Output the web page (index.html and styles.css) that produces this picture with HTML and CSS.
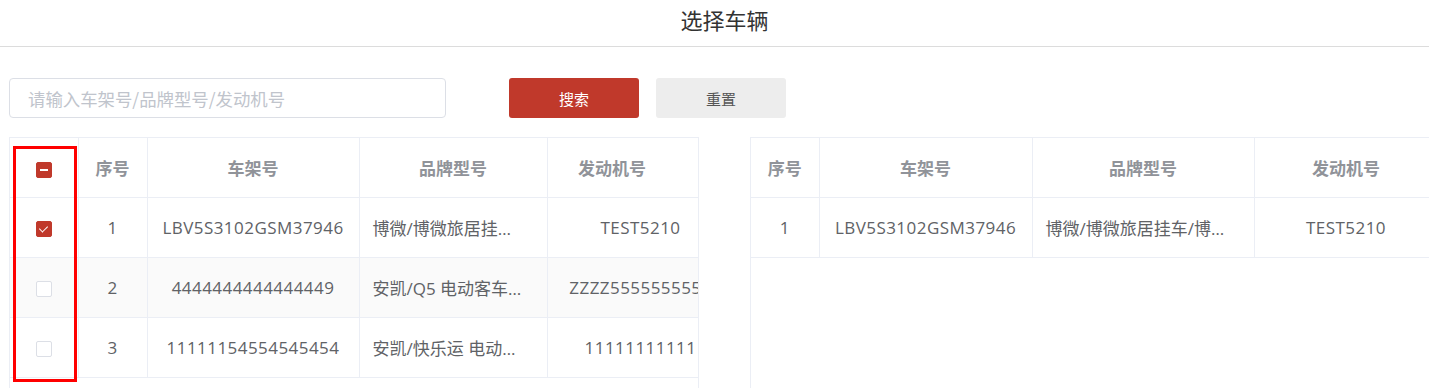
FILE: index.html
```html
<!DOCTYPE html>
<html lang="zh-CN">
<head>
    <meta charset="UTF-8">
    <meta name="viewport" content="width=device-width, initial-scale=1.0">
    <title>选择车辆</title>
    <link rel="stylesheet" href="styles.css">
</head>
<body>
    <div class="dialog-header">选择车辆</div>

    <div class="toolbar">
        <input type="text" class="search-input" placeholder="请输入车架号/品牌型号/发动机号">
        <button class="btn btn-primary">搜索</button>
        <button class="btn btn-default">重置</button>
    </div>

    <div class="panes">
        <div class="pane pane-left">
            <table class="grid grid-left">
                <colgroup>
                    <col class="col-check">
                    <col class="col-index">
                    <col class="col-vin">
                    <col class="col-brand">
                    <col class="col-engine">
                </colgroup>
                <thead>
                    <tr>
                        <th><span class="checkbox half"></span></th>
                        <th>序号</th>
                        <th>车架号</th>
                        <th>品牌型号</th>
                        <th class="engine-head">发动机号</th>
                    </tr>
                </thead>
                <tbody>
                    <tr>
                        <td><span class="checkbox checked"></span></td>
                        <td class="code">1</td>
                        <td class="code">LBV5S3102GSM37946</td>
                        <td class="left ellipsis">博微/博微旅居挂车/博微</td>
                        <td class="code">TEST5210</td>
                    </tr>
                    <tr class="stripe">
                        <td><span class="checkbox"></span></td>
                        <td class="code">2</td>
                        <td class="code">4444444444444449</td>
                        <td class="left ellipsis">安凯/Q5 电动客车/安凯</td>
                        <td class="code clip">ZZZZ5555555555</td>
                    </tr>
                    <tr>
                        <td><span class="checkbox"></span></td>
                        <td class="code">3</td>
                        <td class="code">11111154554545454</td>
                        <td class="left ellipsis">安凯/快乐运 电动客车</td>
                        <td class="code clip">11111111111</td>
                    </tr>
                </tbody>
            </table>
            <div class="highlight"></div>
        </div>

        <div class="pane pane-right">
            <table class="grid grid-right">
                <colgroup>
                    <col class="col-index-r">
                    <col class="col-vin-r">
                    <col class="col-brand-r">
                    <col class="col-engine-r">
                </colgroup>
                <thead>
                    <tr>
                        <th>序号</th>
                        <th>车架号</th>
                        <th>品牌型号</th>
                        <th>发动机号</th>
                    </tr>
                </thead>
                <tbody>
                    <tr>
                        <td class="code">1</td>
                        <td class="code">LBV5S3102GSM37946</td>
                        <td class="left ellipsis">博微/博微旅居挂车/博微旅居</td>
                        <td class="code">TEST5210</td>
                    </tr>
                </tbody>
            </table>
        </div>
    </div>
</body>
</html>
```

FILE: styles.css
```css
*{
    box-sizing: border-box;
}
body{
    margin: 0;
    font-family: "Noto Sans CJK SC", sans-serif;
    color: #606266;
    background: #fff;
    overflow: hidden;
}
.dialog-header{
    height: 47px;
    line-height: 38px;
    padding-left: 20px;
    text-align: center;
    font-size: 22px;
    color: #333;
    border-bottom: 1px solid #dcdcdc;
}
.toolbar{
    display: flex;
    align-items: center;
    padding: 31px 9px 0;
}
.search-input{
    width: 437px;
    height: 40px;
    border: 1px solid #dcdfe6;
    border-radius: 4px;
    padding: 0 18px;
    font-family: inherit;
    font-size: 17.4px;
    color: #606266;
    outline: none;
}
.search-input::placeholder{
    color: #c0c4cc;
}
.btn{
    width: 130px;
    height: 40px;
    border: none;
    border-radius: 3px;
    font-family: inherit;
    font-size: 15px;
}
.btn-primary{
    margin-left: 63px;
    background: #c0392b;
    color: #fff;
}
.btn-default{
    margin-left: 17px;
    background: #ededed;
    color: #555;
}
.panes{
    display: flex;
    gap: 51px;
    padding: 19px 0 0 9px;
    height: 400px;
}
.pane{
    position: relative;
    overflow: hidden;
    border-left: 1px solid #ebeef5;
}
.pane-left{
    width: 690px;
    flex: none;
    border-right: 1px solid #ebeef5;
}
.pane-right{
    flex: 1;
}
.grid{
    border-collapse: collapse;
    table-layout: fixed;
    font-family: "Open Sans", "Noto Sans CJK SC", sans-serif;
    font-size: 17px;
}
.grid-left{
    width: 724px;
}
.grid-right{
    width: 687px;
}
.col-check{ width: 68px; }
.col-index{ width: 69px; }
.col-vin{ width: 212px; }
.col-brand{ width: 188px; }
.col-engine{ width: 187px; }
.col-index-r{ width: 68px; }
.col-vin-r{ width: 213px; }
.col-brand-r{ width: 222px; }
.col-engine-r{ width: 184px; }

.grid th,
.grid td{
    height: 60px;
    padding: 0 13px;
    text-align: center;
    border-top: 1px solid #ebeef5;
    border-right: 1px solid #ebeef5;
    border-bottom: 1px solid #ebeef5;
    white-space: nowrap;
    overflow: hidden;
}
.grid th{
    color: #909399;
    font-family: "Noto Sans CJK SC", sans-serif;
    font-weight: bold;
}
.grid th:first-child,
.grid td:first-child{
    padding: 0;
}
.grid td.code{
    letter-spacing: 0.45px;
}
.grid td.left{
    text-align: left;
    padding-right: 22px;
}
.ellipsis{
    text-overflow: ellipsis;
}
.clip{
    text-overflow: clip;
}
.grid th.engine-head{
    padding-right: 70px;
}
.stripe td{
    background: #fafafa;
}
.checkbox{
    display: inline-block;
    width: 16px;
    height: 16px;
    border: 1px solid #dcdfe6;
    border-radius: 2px;
    background: #fff;
    vertical-align: middle;
    position: relative;
}
.checkbox.checked,
.checkbox.half{
    background: #c0392b;
    border-color: #c0392b;
}
.checkbox.checked::after{
    content: "";
    position: absolute;
    left: 4px;
    top: 2px;
    width: 4px;
    height: 7px;
    border: solid #fff;
    border-width: 0 1px 1px 0;
    transform: rotate(45deg);
}
.checkbox.half::after{
    content: "";
    position: absolute;
    left: 3px;
    right: 3px;
    top: 6px;
    height: 2px;
    background: #fff;
}
.highlight{
    position: absolute;
    left: 3px;
    top: 9px;
    width: 64px;
    height: 236px;
    border: 3px solid #f00;
}
```
